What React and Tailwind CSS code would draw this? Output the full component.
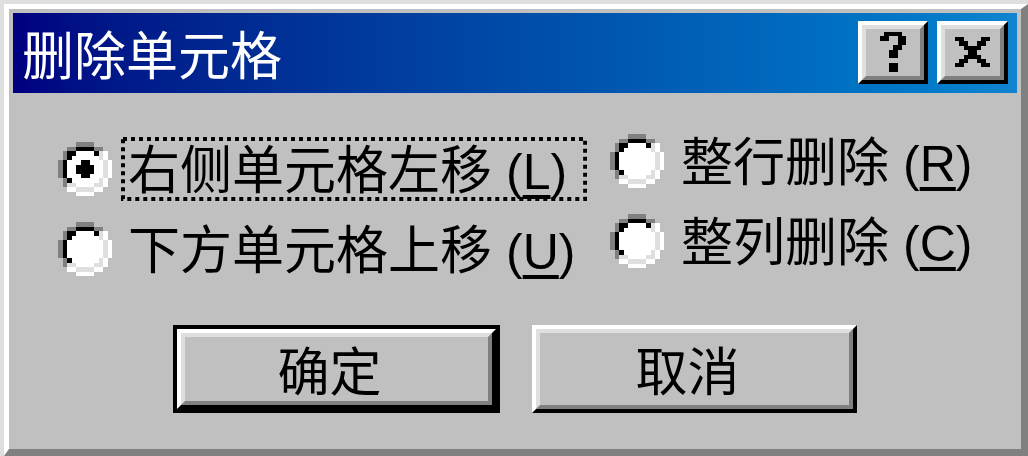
import React from 'react';

const cjk = { fontFamily: '"Noto Sans CJK SC", "Noto Sans", sans-serif' };

// 12x12 pixel radio ring: o = outer bevel, i = inner bevel, f = white fill
const RING = [
  '....oooo....',
  '..ooiiiioo..',
  '.oiiffffiio.',
  '.oiffffffio.',
  'oiffffffffio',
  'oiffffffffio',
  'oiffffffffio',
  'oiffffffffio',
  '.oiffffffio.',
  '.oiiffffiio.',
  '..ooiiiioo..',
  '....oooo....',
];

const Radio = ({ checked }) => {
  const rects = [];
  RING.forEach((row, r) => {
    [...row].forEach((ch, c) => {
      if (ch === '.') return;
      const dark = r + c <= 10;
      let fill = '#ffffff';
      if (ch === 'o') fill = dark ? '#808080' : '#ffffff';
      if (ch === 'i') fill = dark ? '#000000' : '#dfdfdf';
      rects.push(<rect key={`${r}-${c}`} x={c} y={r} width="1" height="1" fill={fill} />);
    });
  });
  if (checked) {
    const dot = [
      [4, 5, 2],
      [5, 4, 4],
      [6, 4, 4],
      [7, 5, 2],
    ];
    dot.forEach(([r, c, w]) => rects.push(<rect key={`d${r}`} x={c} y={r} width={w} height="1" fill="#000" />));
  }
  return (
    <svg width="54" height="54" viewBox="0 0 12 12" shapeRendering="crispEdges" className="shrink-0">
      {rects}
    </svg>
  );
};

const Key = ({ k }) => (
  <span className="ml-[14px] text-[50px]" style={{ fontFamily: '"Liberation Sans", Arial, sans-serif' }}>
    (<span className="underline decoration-[4px] underline-offset-[6px]">{k}</span>)
  </span>
);

const Option = ({ checked, focused, label, k, gap = 'ml-[9px]' }) => (
  <div className="h-[80px] flex items-center">
    <Radio checked={checked} />
    <div className={`relative ${gap} h-[64px] flex items-center pl-[7px] ${focused ? 'pr-[20px]' : 'pr-[7px]'}`}>
      <span className="text-[52px] leading-none text-black whitespace-nowrap" style={cjk}>
        {label}
        <Key k={k} />
      </span>
      {focused && (
        <svg className="absolute inset-0 pointer-events-none" width="100%" height="100%">
          <rect x="2" y="2" width="calc(100% - 4px)" height="calc(100% - 4px)" fill="none" stroke="#000" strokeWidth="4" strokeDasharray="4 4" />
        </svg>
      )}
    </div>
  </div>
);

const Bevel = ({ children, className = '', inner = '' }) => (
  <div className={`border-t-[4px] border-l-[4px] border-white border-r-[4px] border-b-[4px] border-r-black border-b-black ${className}`}>
    <div className={`h-full border-t-[4px] border-l-[4px] border-[#dfdfdf] border-r-[4px] border-b-[4px] border-r-[#808080] border-b-[#808080] bg-[#c0c0c0] flex items-center justify-center ${inner}`}>
      {children}
    </div>
  </div>
);

const Pixels = ({ rows, w, h }) => (
  <svg width={w * 4.4} height={h * 4.4} viewBox={`0 0 ${w} ${h}`} shapeRendering="crispEdges">
    {rows.flatMap((row, r) =>
      [...row].map((ch, c) => (ch === 'x' ? <rect key={`${r}-${c}`} x={c} y={r} width="1" height="1" fill="#000" /> : null))
    )}
  </svg>
);

const HELP = ['.xxxx.', 'xx..xx', '....xx', '...xx.', '..xx..', '..xx..', '......', '..xx..', '..xx..'];
const CLOSE = ['xx....xx', '.xx..xx.', '..xxxx..', '...xx...', '..xxxx..', '.xx..xx.', 'xx....xx'];

export default function App() {
  return (
    <div className="w-[1028px] h-[456px] overflow-hidden bg-[#c0c0c0] border-t-[4px] border-l-[4px] border-[#dfdfdf]">
      <div className="h-full border-t-[5px] border-l-[5px] border-white border-r-[7px] border-b-[7px] border-r-[#808080] border-b-[#808080] p-[4px] flex flex-col">
        {/* title bar */}
        <div className="h-[80px] shrink-0 flex items-center bg-gradient-to-r from-[#000080] to-[#1084d0] pl-[9px] pr-[9px]">
          <span className="text-[52px] leading-none text-white flex-1" style={cjk}>删除单元格</span>
          <div className="flex gap-[9px] pb-[2px]">
            <Bevel className="w-[70px] h-[63px]">
              <Pixels rows={HELP} w={6} h={9} />
            </Bevel>
            <Bevel className="w-[71px] h-[63px]">
              <Pixels rows={CLOSE} w={8} h={7} />
            </Bevel>
          </div>
        </div>

        {/* options */}
        <div className="flex items-start pl-[45px]">
          <div className="w-[552px] mt-[36px]">
            <Option checked focused label="右侧单元格左移" k="L" />
            <Option label="下方单元格上移" k="U" />
          </div>
          <div className="mt-[28px]">
            <Option label="整行删除" k="R" gap="ml-[10px]" />
            <Option label="整列删除" k="C" gap="ml-[10px]" />
          </div>
        </div>

        {/* buttons */}
        <div className="flex gap-[32px] pl-[160px] mt-[36px]">
          <div className="w-[327px] h-[88px] border-[4px] border-black">
            <Bevel className="h-full" inner="pr-[14px]">
              <span className="text-[52px] leading-none text-black" style={cjk}>确定</span>
            </Bevel>
          </div>
          <Bevel className="w-[325px] h-[88px]" inner="pr-[14px]">
            <span className="text-[52px] leading-none text-black" style={cjk}>取消</span>
          </Bevel>
        </div>
      </div>
    </div>
  );
}
